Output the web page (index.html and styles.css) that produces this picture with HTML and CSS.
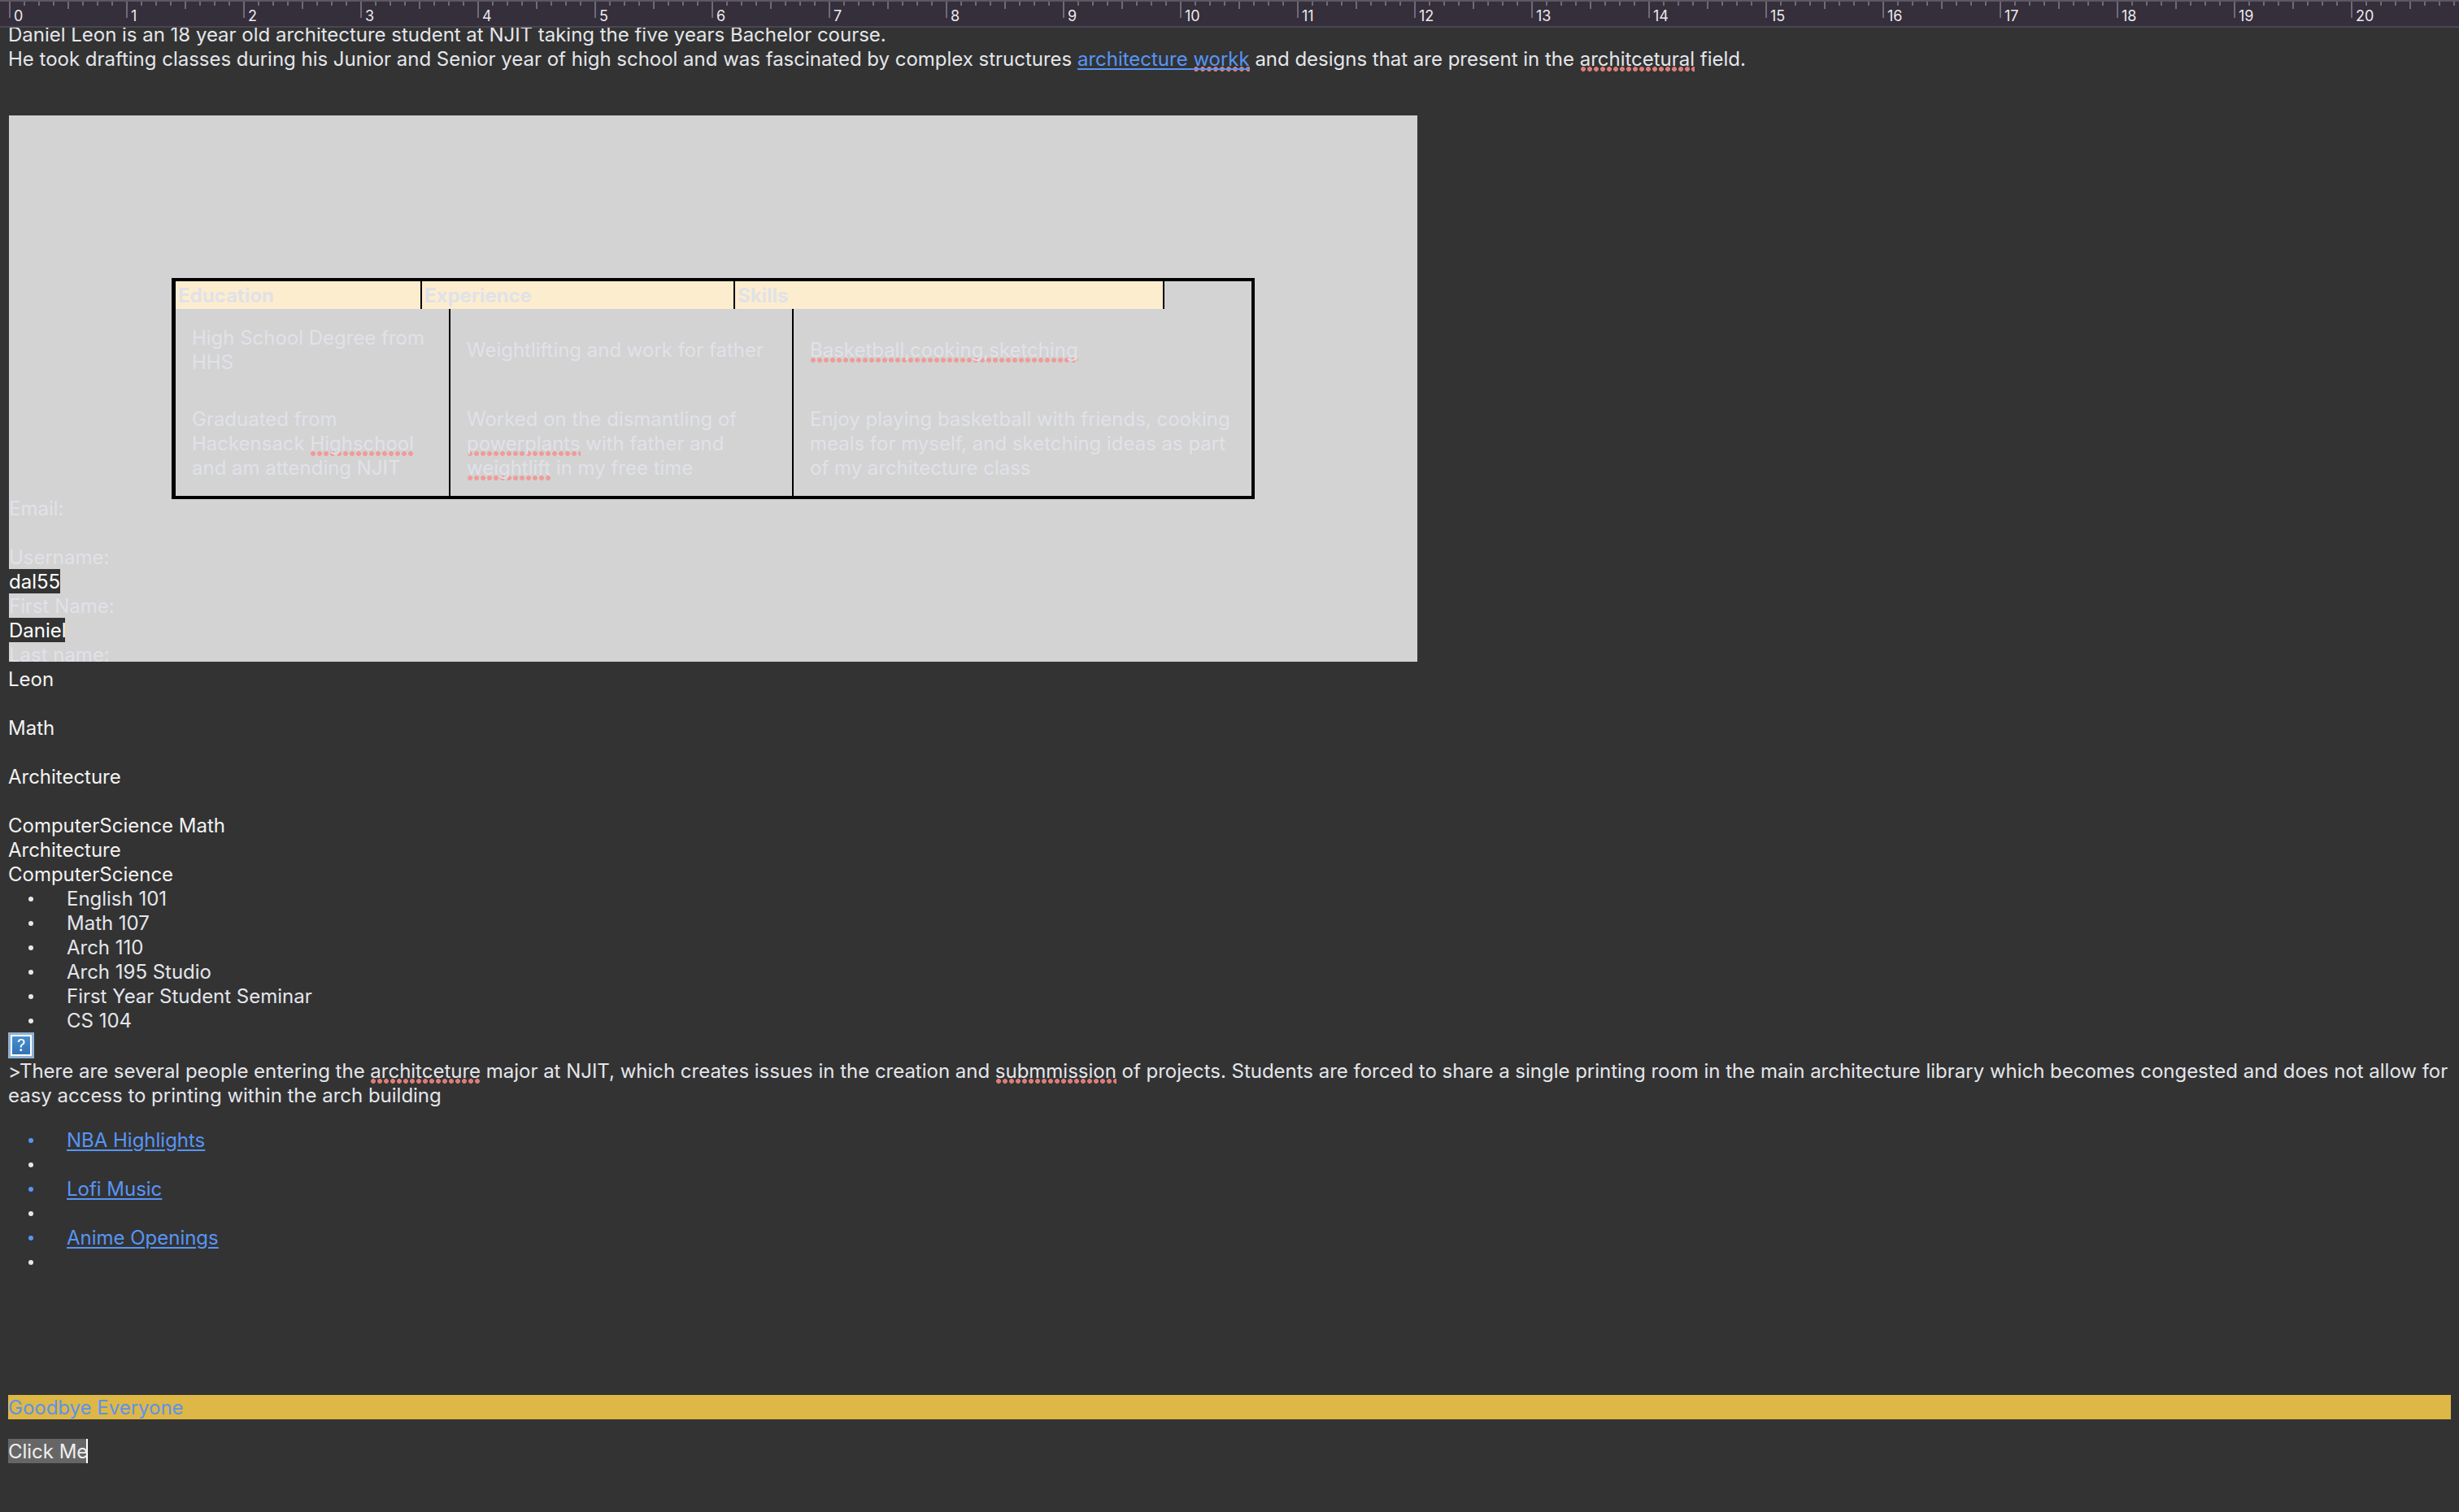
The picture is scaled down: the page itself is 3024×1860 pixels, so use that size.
FILE: index.html
```html
<!DOCTYPE html>
<html lang="en">
<head>
    <meta charset="UTF-8">
    <title>Daniel Leon</title>
    <link rel="stylesheet" href="styles.css">
</head>
<body>
    <!-- ruler sits over the top of the page -->
    <div class="ruler">
        <div class="inch">0</div><div class="inch">1</div><div class="inch">2</div><div class="inch">3</div>
        <div class="inch">4</div><div class="inch">5</div><div class="inch">6</div><div class="inch">7</div>
        <div class="inch">8</div><div class="inch">9</div><div class="inch">10</div><div class="inch">11</div>
        <div class="inch">12</div><div class="inch">13</div><div class="inch">14</div><div class="inch">15</div>
        <div class="inch">16</div><div class="inch">17</div><div class="inch">18</div><div class="inch">19</div>
        <div class="inch">20</div>
    </div>

    <p>Daniel Leon is an 18 year old architecture student at NJIT taking the five years Bachelor course.</p>
    <p>He took drafting classes during his Junior and Senior year of high school and was fascinated by complex structures <a href="#">architecture <span class="typo">workk</span></a> and designs that are present in the <span class="typo">architcetural</span> field.</p>

    <section class="panel">
        <div class="resume">
            <div class="resume-head">
                <div>Education</div>
                <div>Experience</div>
                <div>Skills</div>
            </div>
            <div class="resume-body">
                <div>High School Degree from HHS</div>
                <div class="middle">Weightlifting and work for father</div>
                <div class="middle"><span class="typo">Basketball,cooking,sketching</span></div>
                <div>Graduated from Hackensack <span class="typo">Highschool</span> and am attending NJIT</div>
                <div>Worked on the dismantling of <span class="typo">powerplants</span> with father and <span class="typo">weightlift</span> in my free time</div>
                <div>Enjoy playing basketball with friends, cooking meals for myself, and sketching ideas as part of my architecture class</div>
            </div>
        </div>
        <div class="line label">Email:</div>
        <div class="blank"></div>
        <div class="line label">Username:</div>
        <div class="value value-user">dal55</div>
        <div class="line label">First Name:</div>
        <div class="value value-first">Daniel</div>
        <div class="line label">Last name:</div>
    </section>

    <div class="line bright">Leon</div>
    <div class="blank"></div>
    <div class="line bright">Math</div>
    <div class="blank"></div>
    <div class="line bright">Architecture</div>
    <div class="blank"></div>
    <div class="line bright">ComputerScience Math</div>
    <div class="line bright">Architecture</div>
    <div class="line bright">ComputerScience</div>

    <ul>
        <li>English 101</li>
        <li>Math 107</li>
        <li>Arch 110</li>
        <li>Arch 195 Studio</li>
        <li>First Year Student Seminar</li>
        <li>CS 104</li>
    </ul>

    <div class="missing-img">?</div>

    <p>&gt;There are several people entering the <span class="typo">architceture</span> major at NJIT, which creates issues in the creation and <span class="typo">submmission</span> of projects. Students are forced to share a single printing room in the main architecture library which becomes congested and does not allow for easy access to printing within the arch building</p>

    <ul class="links">
        <li class="link-item"><a href="#">NBA Highlights</a></li>
        <li></li>
        <li class="link-item"><a href="#">Lofi Music</a></li>
        <li></li>
        <li class="link-item"><a href="#">Anime Openings</a></li>
        <li></li>
    </ul>

    <div class="line goodbye">Goodbye Everyone</div>
    <div class="line click-me">Click Me</div>
</body>
</html>
```

FILE: styles.css
```css
* {
    margin: 0;
    padding: 0;
    box-sizing: border-box;
}
body {
    background-color: #333;
    color: #e4e6eb;
    font-family: Inter, "Liberation Sans", sans-serif;
    font-size: 24px;
    letter-spacing: -0.015px;
    line-height: 30px;
    padding: 27px 10px 0;
    height: 1860px;
    overflow: hidden;
}
p {
    padding-top: 1px;
    margin-bottom: -1px;
}
a {
    color: #5795f5;
    text-decoration: underline;
    text-decoration-thickness: 2px;
    text-underline-offset: 3px;
}

/* one 30px row of text */
.line, .value, li {
    line-height: 28px;
    padding-top: 2px;
}
.blank {
    height: 30px;
}
.bright {
    color: #f2f2f2;
}

/* ruler */
.ruler {
    position: absolute;
    left: 0;
    top: 0;
    width: 100%;
    height: 34px;
    padding-left: 11px;
    display: flex;
    overflow: hidden;
    background-color: #352e3b;
    border-top: 2px solid #5c5763;
    border-bottom: 2px solid #4a4551;
}
.inch {
    flex: 0 0 144px;
    padding: 4px 0 0 6px;
    font-size: 18px;
    line-height: 28px;
    color: #ebe9ee;
    background:
        linear-gradient(#6f6a76, #6f6a76) 0 0 / 2px 20px no-repeat,
        linear-gradient(#6f6a76, #6f6a76) 72px 0 / 2px 9px no-repeat,
        repeating-linear-gradient(to right, #6f6a76 0 2px, transparent 2px 18px) 0 0 / 100% 5px no-repeat;
}

/* spelling marks */
.typo {
    padding-bottom: 2px;
    background-image: radial-gradient(circle at center, #dc7d79 2.6px, transparent 3.2px);
    background-size: 8px 6px;
    background-repeat: repeat-x;
    background-position: left bottom 1px;
}
.panel .typo {
    background-image: radial-gradient(circle at center, #f09b98 2.6px, transparent 3.2px);
}

/* grey box */
.panel {
    margin: 55px 0 6px 1px;
    width: 1732px;
    height: 672px;
    padding-top: 200px;
    background-color: #d3d3d3;
}
.label {
    color: #e0e2e8;
}
.value {
    height: 30px;
    background-color: #333;
    color: #fff;
    white-space: nowrap;
}
.value-user {
    width: 63px;
}
.value-first {
    width: 69px;
}

/* table */
.resume {
    margin: 0 200px -4px;
    height: 272px;
    border: 4px solid #000;
    border-left-width: 5px;
    color: #e0e2e8;
}
.resume-head {
    display: grid;
    grid-template-columns: 303px 385px 528px;
    height: 34px;
    font-weight: 700;
}
.resume-head div {
    padding: 3px 0 0 3px;
    background-color: #fdedcf;
    border-right: 2px solid #000;
}
.resume-body {
    display: grid;
    grid-template-columns: 338px 422px 1fr;
    grid-template-rows: 100px 130px;
    height: 230px;
}
.resume-body div {
    padding: 21px 20px 0;
    border-right: 2px solid #000;
}
.resume-body div.middle {
    padding-top: 36px;
}
.resume-body div:nth-child(3n) {
    border-right: 0;
}

/* lists */
ul {
    list-style: none;
}
li {
    display: flex;
    align-items: center;
    height: 30px;
}
li::before {
    content: "";
    flex: none;
    width: 6px;
    height: 6px;
    margin: 0 41px 0 25px;
    border-radius: 50%;
    background-color: #e8e8e8;
}
li.link-item {
    padding-top: 1px;
}
li.link-item::before {
    background-color: #5795f5;
}
.links {
    margin-top: 25px;
}

/* broken picture */
.missing-img {
    width: 32px;
    height: 32px;
    border: 3px solid #8fb2d6;
    box-shadow: inset 0 0 0 2px #fff;
    background: linear-gradient(#4a92d2, #2f70b2);
    color: #fff;
    font-size: 20px;
    line-height: 26px;
    text-align: center;
}

/* bottom */
.goodbye {
    margin-top: 149px;
    background-color: #deb746;
    color: #5b93f0;
}
.click-me {
    width: 98px;
    margin-top: 24px;
    background-color: #666;
    color: #eee;
    border-right: 2px solid #fff;
    white-space: nowrap;
}
```
